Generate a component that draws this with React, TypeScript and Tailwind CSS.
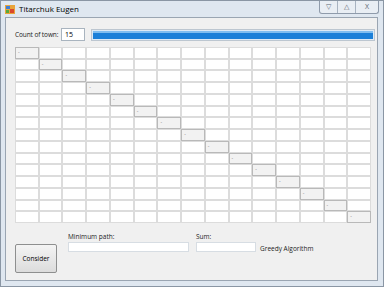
import React from "react";

const N = 15;

const Cell = ({ diag }: { diag: boolean }) =>
  diag ? (
    <div className="border border-[#b9b9b9] bg-[#f2f2f2] text-[5px] leading-[9px] pl-[2px] text-[#777]">
      -
    </div>
  ) : (
    <div className="border border-[#dcdcdc] bg-white"></div>
  );

const App = () => {
  const cells = [];
  for (let r = 0; r < N; r++) {
    for (let c = 0; c < N; c++) {
      cells.push(<Cell key={`${r}-${c}`} diag={r === c} />);
    }
  }

  return (
    <div
      className="w-[384px] h-[287px] bg-[#dfe7f0] border border-[#8a96a4] flex flex-col overflow-hidden"
      style={{ fontFamily: '"Open Sans", "Noto Sans", sans-serif' }}
    >
      {/* title bar */}
      <div className="h-[16px] flex items-start justify-between shrink-0">
        <div className="flex items-center gap-[4px] pl-[4px] pt-[3px]">
          <svg width="10" height="9" viewBox="0 0 10 9">
            <rect x="0" y="0" width="10" height="9" fill="#e8a33a" />
            <rect x="1" y="1" width="4" height="3" fill="#3d7fd6" />
            <rect x="5" y="4" width="4" height="4" fill="#d9482e" />
            <rect x="1" y="5" width="3" height="3" fill="#5aa83c" />
          </svg>
          <span className="text-[8px] leading-[10px] text-black">Titarchuk Eugen</span>
        </div>
        <div className="flex mr-[4px] border border-t-0 border-[#8f9bab] rounded-b-[3px] overflow-hidden bg-[#e9eef4]">
          <div className="w-[18px] h-[12px] flex items-center justify-center border-r border-[#a8b3c1] text-[7px] text-[#5a6470]">
            ▽
          </div>
          <div className="w-[18px] h-[12px] flex items-center justify-center border-r border-[#a8b3c1] text-[7px] text-[#5a6470]">
            △
          </div>
          <div className="w-[22px] h-[12px] flex items-center justify-center text-[7px] text-[#5a6470]">
            X
          </div>
        </div>
      </div>

      {/* client area */}
      <div className="ml-[4px] mr-[5px] mb-[5px] flex-1 bg-[#f0f0f0] border border-[#9aa5b2] flex flex-col pl-[9px]">
        <div className="flex items-center mt-[10px] h-[13px]">
          <span className="text-[6.5px] tracking-[-0.1px] text-[#222] w-[46px] shrink-0 whitespace-nowrap">Count of town:</span>
          <div className="w-[24px] h-[13px] bg-white border border-[#a9b4bf] text-[7px] leading-[11px] pl-[3px] text-black">
            15
          </div>
          <div className="ml-[6px] w-[284px] h-[12px] border border-[#bcc6d0] bg-[#dbe9f5] p-[1px]">
            <div className="w-full h-full bg-[#1a7fd8] border-t-[2px] border-[#7fbdf0]"></div>
          </div>
        </div>

        <div className="mt-[6px] w-[356px] h-[176px] grid grid-cols-15 grid-rows-15">
          {cells}
        </div>

        <div className="flex mt-[9px]">
          <div className="mt-[12px] w-[42px] h-[29px] border border-[#8e8f8f] rounded-[2px] bg-gradient-to-b from-[#f4f4f4] to-[#dcdcdc] flex items-center justify-center text-[6.5px] text-black">
            Consider
          </div>
          <div className="ml-[11px] flex flex-col">
            <span className="text-[6.5px] leading-[9px] text-[#222]">Minimum path:</span>
            <div className="w-[121px] h-[10px] bg-white border border-[#d7dde3] mt-[1px]"></div>
          </div>
          <div className="ml-[7px] flex flex-col">
            <span className="text-[6.5px] leading-[9px] text-[#222]">Sum:</span>
            <div className="w-[60px] h-[10px] bg-white border border-[#d7dde3] mt-[1px]"></div>
          </div>
          <span className="ml-[4px] mt-[12px] text-[6.5px] leading-[9px] text-[#222]">Greedy Algorithm</span>
        </div>
      </div>
    </div>
  );
};

export default App;
